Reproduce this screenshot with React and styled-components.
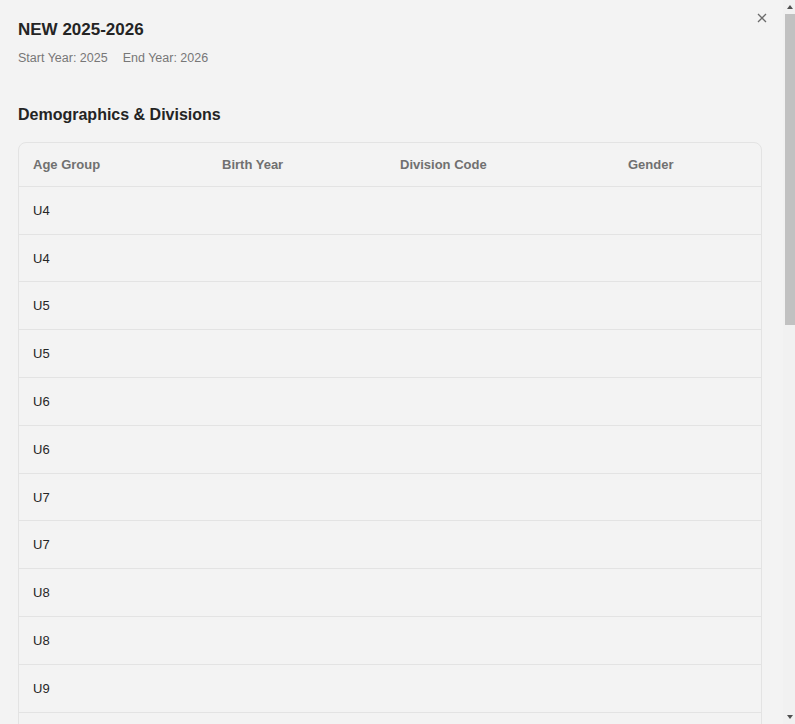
import React from "react";
import styled, { createGlobalStyle } from "styled-components";

const GlobalStyle = createGlobalStyle`
  html, body {
    margin: 0;
    padding: 0;
    background: #f3f3f3;
    font-family: "Liberation Sans", Arial, sans-serif;
    overflow: hidden;
  }
`;

const ageGroups = [4, 5, 6, 7, 8, 9, 10, 11, 12, 13, 14, 15, 16, 17, 18].flatMap((n) => [
  { age: `U${n}`, birthYear: "", code: "", gender: "" },
  { age: `U${n}`, birthYear: "", code: "", gender: "" }
]);

const Page = styled.div`
  display: flex;
  height: 100vh;
  background: #f3f3f3;
`;

const ScrollArea = styled.div`
  flex: 1;
  min-width: 0;
  overflow-y: auto;
  scrollbar-width: none;

  &::-webkit-scrollbar {
    display: none;
  }
`;

// drawn rail, since the headless browser hides native scrollbars
const ScrollRail = styled.div`
  flex: 0 0 12px;
  display: flex;
  flex-direction: column;
  background: #f1f1f1;
`;

const RailButton = styled.div`
  flex: 0 0 14px;
  display: flex;
  align-items: center;
  justify-content: center;
  padding-left: 2px;

  &::after {
    content: "";
    width: 0;
    height: 0;
    border-left: 3px solid transparent;
    border-right: 3px solid transparent;
    ${({ $down }) =>
      $down ? "border-top: 4px solid #505050;" : "border-bottom: 4px solid #505050;"}
  }
`;

const RailTrack = styled.div`
  flex: 1;
  display: flex;
  flex-direction: column;
  padding-left: 2px;
`;

const RailThumb = styled.div`
  background: #c1c1c1;
`;

const Dialog = styled.div`
  position: relative;
  padding: 20px 21px 20px 18px;
`;

const CloseButton = styled.button`
  position: absolute;
  top: 12px;
  right: 15px;
  width: 12px;
  height: 12px;
  padding: 0;
  border: none;
  background: transparent;
  cursor: pointer;
  display: flex;
  align-items: center;
  justify-content: center;

  svg {
    width: 10px;
    height: 10px;
    stroke: #6b6b6b;
  }
`;

const Title = styled.h2`
  margin: 0;
  font-size: 17px;
  font-weight: 700;
  color: #242424;
`;

const Meta = styled.div`
  display: flex;
  gap: 15px;
  margin-top: 11px;
  font-size: 12.5px;
  color: #777;
`;

const SectionTitle = styled.h3`
  margin: 41px 0 18px;
  font-size: 16px;
  font-weight: 700;
  color: #242424;
`;

const Table = styled.div`
  border: 1px solid #e3e3e3;
  border-radius: 8px;
  overflow: hidden;
`;

const Row = styled.div`
  display: grid;
  grid-template-columns: 189px 178px 228px 1fr;
  border-top: ${({ $head }) => ($head ? "none" : "1px solid #e3e3e3")};
`;

const Cell = styled.div`
  padding: ${({ $head }) => ($head ? "15px 14px 13px" : "17px 14px 15px")};
  font-size: 13px;
  line-height: 14.8px;
  min-height: 14.8px;
  font-weight: ${({ $head }) => ($head ? 700 : 400)};
  color: ${({ $head }) => ($head ? "#707070" : "#262626")};
`;

const CloseIcon = () => (
  <svg viewBox="0 0 10 10" fill="none" strokeWidth="1.3">
    <path d="M1 1 L9 9 M9 1 L1 9" />
  </svg>
);

export default function App() {
  return (
    <>
      <GlobalStyle />
      <Page>
        <ScrollArea>
          <Dialog>
            <CloseButton aria-label="Close">
              <CloseIcon />
            </CloseButton>
            <Title>NEW 2025-2026</Title>
            <Meta>
              <span>Start Year: 2025</span>
              <span>End Year: 2026</span>
            </Meta>
            <SectionTitle>Demographics &amp; Divisions</SectionTitle>
            <Table>
              <Row $head>
                <Cell $head>Age Group</Cell>
                <Cell $head>Birth Year</Cell>
                <Cell $head>Division Code</Cell>
                <Cell $head>Gender</Cell>
              </Row>
              {ageGroups.map((g, i) => (
                <Row key={i}>
                  <Cell>{g.age}</Cell>
                  <Cell>{g.birthYear}</Cell>
                  <Cell>{g.code}</Cell>
                  <Cell>{g.gender}</Cell>
                </Row>
              ))}
            </Table>
          </Dialog>
        </ScrollArea>
        <ScrollRail>
          <RailButton />
          <RailTrack>
            <RailThumb style={{ height: 311 }} />
          </RailTrack>
          <RailButton $down />
        </ScrollRail>
      </Page>
    </>
  );
}
